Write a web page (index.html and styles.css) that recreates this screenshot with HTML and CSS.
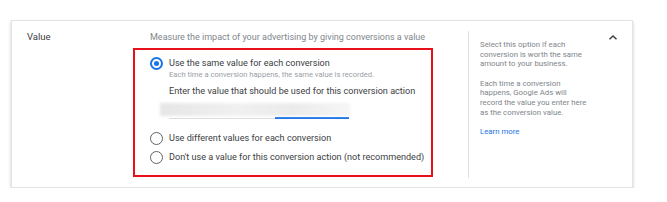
FILE: index.html
```html
<!DOCTYPE html>
<html lang="en">
<head>
    <meta charset="UTF-8">
    <title>Conversion value</title>
    <link rel="stylesheet" href="styles.css">
</head>
<body>
    <div class="card">
        <div class="label">Value</div>

        <div class="main">
            <div class="desc">Measure the impact of your advertising by giving conversions a value</div>

            <div class="highlight">
                <div class="option">
                    <span class="radio checked"></span>
                    <div class="option-body">
                        <div class="option-title">Use the same value for each conversion</div>
                        <div class="option-sub">Each time a conversion happens, the same value is recorded.</div>
                        <div class="enter">Enter the value that should be used for this conversion action</div>
                        <div class="value-input">
                            <div class="blur"></div>
                            <div class="underline">
                                <span class="line-rest"></span>
                                <span class="line-active"></span>
                            </div>
                        </div>
                    </div>
                </div>
                <div class="option second">
                    <span class="radio"></span>
                    <div class="option-title">Use different values for each conversion</div>
                </div>
                <div class="option">
                    <span class="radio"></span>
                    <div class="option-title">Don't use a value for this conversion action (not recommended)</div>
                </div>
            </div>
        </div>

        <div class="help">
            <p>Select this option if each<br>conversion is worth the same<br>amount to your business.</p>
            <p>Each time a conversion<br>happens, Google Ads will<br>record the value you enter here<br>as the conversion value.</p>
            <a href="#" class="learn">Learn more</a>
        </div>

        <div class="toggle">
            <svg width="10" height="7" viewBox="0 0 10 7"><path d="M1.5 5.3 L5 2 L8.5 5.3" fill="none" stroke="#3c4043" stroke-width="1.5"/></svg>
        </div>
    </div>
</body>
</html>
```

FILE: styles.css
```css
body {
    margin: 0;
    background: #fff;
    font-family: Roboto, 'Noto Sans', sans-serif;
    color: #3c4043;
}
.card {
    display: flex;
    margin: 20px 0 0 11px;
    width: 622px;
    height: 168px;
    box-sizing: border-box;
    border: 1px solid #e4e4e4;
    box-shadow: 0 2px 3px rgba(0, 0, 0, 0.22);
    padding: 10px 0 9px 15px;
}
.label {
    width: 123px;
    flex-shrink: 0;
    font-size: 9.5px;
    line-height: 12px;
    color: #3c4043;
}
.main {
    width: 318px;
    flex-shrink: 0;
}
.desc {
    font-size: 9px;
    line-height: 12px;
    color: #80868b;
    white-space: nowrap;
}
.highlight {
    margin: 5px 0 0 -17px;
    width: 300px;
    height: 129px;
    box-sizing: border-box;
    border: 2px solid #e8111b;
    padding: 7px 0 0 15px;
}
.option {
    display: flex;
    align-items: flex-start;
}
.option.second {
    margin-top: 12px;
    margin-bottom: 6px;
}
.option-body {
    flex: 1;
}
.radio {
    width: 13px;
    height: 13px;
    box-sizing: border-box;
    border: 1.5px solid #5f6368;
    border-radius: 50%;
    margin-right: 6px;
    flex-shrink: 0;
    position: relative;
}
.radio.checked {
    border: 2px solid #1a73e8;
}
.radio.checked::after {
    content: '';
    position: absolute;
    left: 2px;
    top: 2px;
    width: 5px;
    height: 5px;
    border-radius: 50%;
    background: #1a73e8;
}
.option-title {
    font-size: 9.1px;
    line-height: 13px;
    white-space: nowrap;
}
.option-sub {
    font-size: 7.6px;
    line-height: 10px;
    color: #9aa0a6;
    white-space: nowrap;
}
.enter {
    margin-top: 5px;
    font-size: 9.1px;
    line-height: 13px;
    white-space: nowrap;
}
.value-input {
    margin: 5px 0 0 -9px;
    width: 190px;
    height: 17px;
}
.blur {
    height: 13px;
    background: linear-gradient(90deg, #e6e6e6, #f0f0f0 40%, #ebebeb 70%, #f6f6f6);
    filter: blur(1.5px);
}
.underline {
    display: flex;
    align-items: flex-end;
    margin: 1px 0 0 9px;
    width: 180px;
    height: 2px;
}
.line-rest {
    width: 106px;
    height: 1px;
    background: #dadce0;
}
.line-active {
    flex: 1;
    height: 2px;
    background: #1a73e8;
}
.help {
    width: 112px;
    flex-shrink: 0;
    border-left: 1px solid #e0e0e0;
    padding: 9px 0 0 11px;
    font-size: 7.8px;
    line-height: 9.6px;
    color: #80868b;
    white-space: nowrap;
}
.help p {
    margin: 0 0 10px;
}
.learn {
    color: #1a73e8;
    text-decoration: none;
}
.toggle {
    padding: 3px 0 0 16px;
}
.toggle svg {
    display: block;
}
```
